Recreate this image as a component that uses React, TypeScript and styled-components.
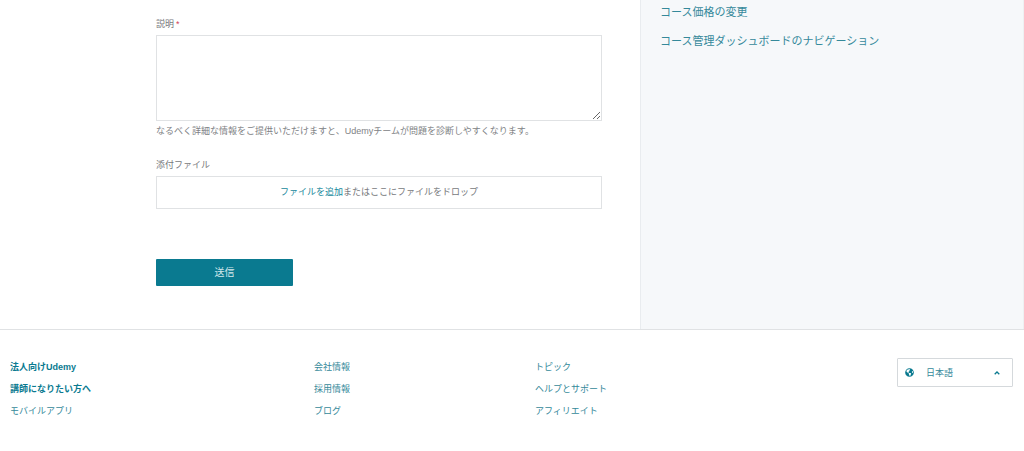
import React from "react";
import styled, { createGlobalStyle } from "styled-components";
import { FaGlobeAmericas } from "react-icons/fa";

const teal = "#0a7a90";
const tealSoft = "#35899a";
const line = "#e0e2e4";

const GlobalStyle = createGlobalStyle`
  *, *::before, *::after { box-sizing: border-box; }
  body {
    margin: 0;
    background: #fff;
    color: #77797c;
    font-family: "Liberation Sans", "Noto Sans CJK JP", sans-serif;
    font-size: 9px;
    line-height: 14px;
  }
`;

const Main = styled.main`
  display: grid;
  grid-template-columns: 5fr 3fr;
  border-bottom: 1px solid ${line};
`;

const Form = styled.form`
  display: flex;
  flex-direction: column;
  align-items: stretch;
  padding: 17px 38px 43px 156px;
`;

const Field = styled.div`
  display: flex;
  flex-direction: column;
`;

const Label = styled.label`
  margin-bottom: 4px;
`;

const Required = styled.span`
  margin-left: 2px;
  color: #d2405a;
`;

const TextArea = styled.textarea`
  display: block;
  width: 100%;
  height: 86px;
  padding: 6px;
  border: 1px solid ${line};
  background: #fff;
  color: #77797c;
  font: inherit;
  resize: vertical;
`;

const Hint = styled.p`
  margin: 3px 0 20px;
  color: #808285;
`;

const DropZone = styled.div`
  position: relative;
  display: flex;
  align-items: center;
  justify-content: center;
  height: 33px;
  padding-bottom: 2px;
  border: 1px solid ${line};
`;

const HiddenFile = styled.input`
  position: absolute;
  inset: 0;
  width: 100%;
  height: 100%;
  opacity: 0;
  cursor: pointer;
`;

const AddFile = styled.span`
  color: #16889c;
`;

const Submit = styled.button`
  width: 137px;
  height: 27px;
  margin-top: 50px;
  padding: 0;
  border: 0;
  border-radius: 1px;
  background: ${teal};
  color: #d5e9ed;
  font: inherit;
  font-size: 10px;
  cursor: pointer;
`;

const Sidebar = styled.aside`
  display: flex;
  flex-direction: column;
  align-items: flex-start;
  gap: 15px;
  padding: 5px 19px;
  border-left: 1px solid #e9ecef;
  border-right: 1px solid #eef0f2;
  background: #f6f8fa;
`;

const TextLink = styled.a<{ $strong?: boolean; $large?: boolean }>`
  color: ${(p) => (p.$strong ? teal : tealSoft)};
  font-size: ${(p) => (p.$large ? 11 : 9)}px;
  font-weight: ${(p) => (p.$strong ? 700 : 400)};
  text-decoration: none;
  &:hover { text-decoration: underline; }
`;

const Footer = styled.footer`
  display: grid;
  grid-template-columns: 304fr 221fr 362fr 116px;
  align-items: start;
  padding: 28px 11px 32px 10px;
`;

const LinkList = styled.ul`
  display: flex;
  flex-direction: column;
  gap: 8px;
  margin: 0;
  padding: 2px 0 0;
  list-style: none;

  li { display: flex; }
`;

const LanguageButton = styled.button`
  display: flex;
  align-items: center;
  gap: 12px;
  height: 29px;
  padding: 0 12px 0 7px;
  border: 1px solid #d5d9dc;
  border-radius: 1px;
  background: #fff;
  color: ${tealSoft};
  font: inherit;
  cursor: pointer;

  svg { color: ${teal}; }
`;

const Chevron = styled.svg`
  margin-left: auto;
`;

type FooterLink = { text: string; strong?: boolean };

const footerColumns: FooterLink[][] = [
  [
    { text: "法人向けUdemy", strong: true },
    { text: "講師になりたい方へ", strong: true },
    { text: "モバイルアプリ" },
  ],
  [{ text: "会社情報" }, { text: "採用情報" }, { text: "ブログ" }],
  [{ text: "トピック" }, { text: "ヘルプとサポート" }, { text: "アフィリエイト" }],
];

export default function App() {
  return (
    <>
      <GlobalStyle />
      <Main lang="ja">
        <Form onSubmit={(e) => e.preventDefault()}>
          <Field>
            <Label htmlFor="description">
              説明<Required>*</Required>
            </Label>
            <TextArea id="description" required aria-describedby="description-hint" />
            <Hint id="description-hint">
              なるべく詳細な情報をご提供いただけますと、Udemyチームが問題を診断しやすくなります。
            </Hint>
          </Field>
          <Field>
            <Label htmlFor="attachments">添付ファイル</Label>
            <DropZone>
              <AddFile>ファイルを追加</AddFile>
              <span>またはここにファイルをドロップ</span>
              <HiddenFile id="attachments" type="file" multiple />
            </DropZone>
          </Field>
          <Submit type="submit">送信</Submit>
        </Form>
        <Sidebar>
          <TextLink href="#pricing" $large>コース価格の変更</TextLink>
          <TextLink href="#dashboard" $large>コース管理ダッシュボードのナビゲーション</TextLink>
        </Sidebar>
      </Main>
      <Footer lang="ja">
        {footerColumns.map((links, i) => (
          <LinkList key={i}>
            {links.map((link) => (
              <li key={link.text}>
                <TextLink href="#" $strong={link.strong}>{link.text}</TextLink>
              </li>
            ))}
          </LinkList>
        ))}
        <LanguageButton type="button" aria-haspopup="listbox">
          <FaGlobeAmericas size={9} aria-hidden />
          日本語
          <Chevron width="6" height="6" viewBox="0 0 6 6" fill="none" stroke="currentColor" strokeWidth="1.3" aria-hidden>
            <path d="M0.7 4.3 3 2l2.3 2.3" />
          </Chevron>
        </LanguageButton>
      </Footer>
    </>
  );
}
